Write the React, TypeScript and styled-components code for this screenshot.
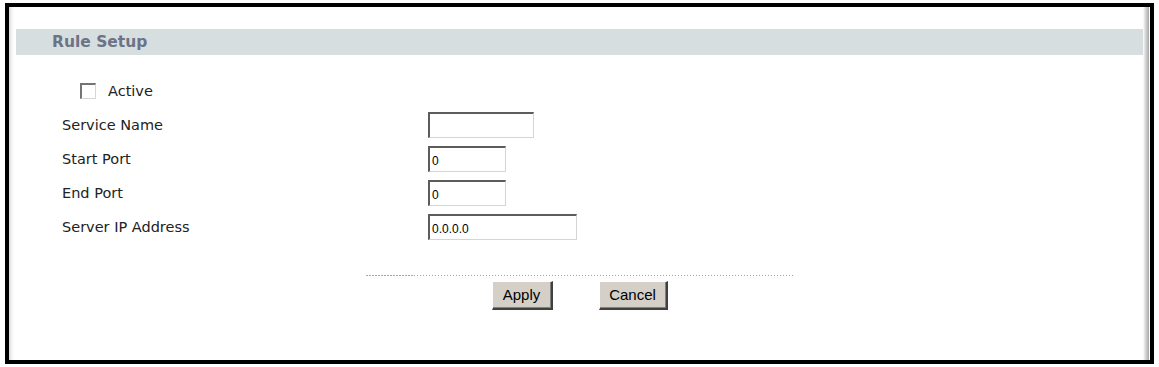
import React, { FC, useState } from 'react'
import styled, { createGlobalStyle } from 'styled-components'

const GlobalStyle = createGlobalStyle`
  html, body {
    margin: 0;
    padding: 0;
    background: #ffffff;
  }
  body {
    font-family: "DejaVu Sans", Verdana, sans-serif;
  }
`

const Frame = styled.div`
  box-sizing: border-box;
  width: 1149px;
  height: 361px;
  margin: 3px 0 0 5px;
  border: 4px solid #000;
  background: linear-gradient(
    to right,
    #d9d9d9 0,
    #eeeeee 2px,
    #fbfbfb 4px,
    #ffffff 6px,
    #ffffff calc(100% - 7px),
    #dedede calc(100% - 5px),
    #a8a8a8 calc(100% - 1px),
    #ffffff calc(100% - 1px)
  );
  padding-top: 22px;
`

const SectionBar = styled.div`
  height: 26px;
  margin: 0 7px;
  padding-left: 36px;
  display: flex;
  align-items: center;
  background: #d7dee0;
  color: #6c7387;
  font-size: 15.5px;
  font-weight: bold;
`

const Form = styled.div`
  display: grid;
  grid-template-columns: 366px auto;
  grid-auto-rows: 34px;
  align-items: center;
  margin: 19px 0 0 53px;
`

const ActiveRow = styled.label`
  grid-column: 1 / span 2;
  height: 32px;
  display: flex;
  align-items: center;
  gap: 12px;
  padding-left: 18px;
  font-size: 14.5px;
  color: #222;
`

const Check = styled.span<{ $on: boolean }>`
  box-sizing: border-box;
  width: 16px;
  height: 16px;
  background: #fff;
  border-top: 2px solid #747474;
  border-left: 2px solid #747474;
  border-right: 1px solid #d6d6d6;
  border-bottom: 1px solid #d6d6d6;
  display: flex;
  align-items: center;
  justify-content: center;
  font-size: 11px;
  line-height: 1;
  color: #000;
  &::after {
    content: '${(p) => (p.$on ? '✓' : '')}';
  }
`

const Label = styled.span`
  font-size: 14.5px;
  color: #222;
`

const Field = styled.input<{ $w: number }>`
  box-sizing: border-box;
  width: ${(p) => p.$w}px;
  height: 26px;
  margin: 0;
  padding: 3px 0 0 2px;
  border-top: 2px solid #5c5c5c;
  border-left: 2px solid #5c5c5c;
  border-right: 1px solid #d4d4d4;
  border-bottom: 1px solid #d4d4d4;
  outline: none;
  background: #fff;
  font-family: "Liberation Sans", Arial, sans-serif;
  font-size: 12px;
  color: #000;
`

const Divider = styled.div`
  width: 427px;
  height: 1px;
  margin: 31px auto 0;
  background: repeating-linear-gradient(to right, #a5a5a5 0, #a5a5a5 1.5px, transparent 1.5px, transparent 3px);
`

const Buttons = styled.div`
  display: flex;
  justify-content: center;
  gap: 46px;
  margin-top: 5px;
`

const Button = styled.button<{ $w: number }>`
  box-sizing: border-box;
  width: ${(p) => p.$w}px;
  height: 29px;
  margin: 0;
  padding: 0 0 2px;
  background: #d4d0c8;
  border-top: 1px solid #ffffff;
  border-left: 1px solid #ffffff;
  border-right: 2px solid #404040;
  border-bottom: 2px solid #404040;
  box-shadow: inset -1px -1px 0 #808080;
  font-family: "Liberation Sans", Arial, sans-serif;
  font-size: 15px;
  color: #000;
`

const App: FC = () => {
  const [active, setActive] = useState(false)
  const [name, setName] = useState('')
  const [startPort, setStartPort] = useState('0')
  const [endPort, setEndPort] = useState('0')
  const [ip, setIp] = useState('0.0.0.0')

  return (
    <>
      <GlobalStyle />
      <Frame>
        <SectionBar>Rule Setup</SectionBar>
        <Form>
          <ActiveRow onClick={() => setActive(!active)}>
            <Check $on={active} />
            Active
          </ActiveRow>
          <Label>Service Name</Label>
          <div>
            <Field $w={106} value={name} onChange={(e) => setName(e.target.value)} />
          </div>
          <Label>Start Port</Label>
          <div>
            <Field $w={78} value={startPort} onChange={(e) => setStartPort(e.target.value)} />
          </div>
          <Label>End Port</Label>
          <div>
            <Field $w={78} value={endPort} onChange={(e) => setEndPort(e.target.value)} />
          </div>
          <Label>Server IP Address</Label>
          <div>
            <Field $w={149} value={ip} onChange={(e) => setIp(e.target.value)} />
          </div>
        </Form>
        <Divider />
        <Buttons>
          <Button type="button" $w={61}>Apply</Button>
          <Button type="button" $w={69}>Cancel</Button>
        </Buttons>
      </Frame>
    </>
  )
}

export default App
